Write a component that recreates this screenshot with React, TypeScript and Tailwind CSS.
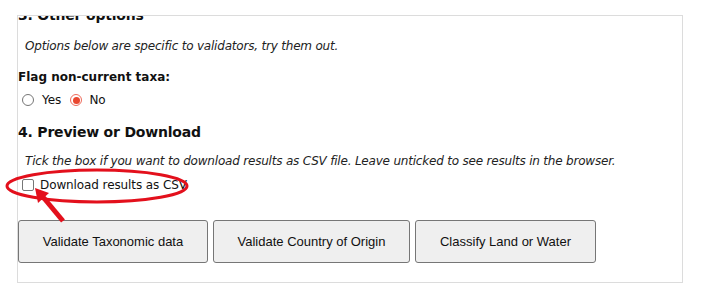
import React from "react";

function Radio({ checked }: { checked?: boolean }) {
  return checked ? (
    <span className="flex h-[12px] w-[12px] items-center justify-center rounded-full border border-[#ef6b5b] bg-white">
      <span className="h-[7px] w-[7px] rounded-full bg-[#e9472f]"></span>
    </span>
  ) : (
    <span className="h-[12px] w-[12px] rounded-full border border-[#767676] bg-white"></span>
  );
}

function Annotation() {
  return (
    <svg
      className="pointer-events-none absolute left-0 top-0"
      width="712"
      height="297"
      viewBox="0 0 712 297"
    >
      <ellipse cx="97" cy="186" rx="90" ry="16" fill="none" stroke="#e3101c" strokeWidth="3" />
      <line x1="63" y1="221" x2="43" y2="197" stroke="#e3101c" strokeWidth="5" />
      <polygon points="35,188 38,203 49,193" fill="#e3101c" />
    </svg>
  );
}

export default function App() {
  const buttons = [
    { label: "Validate Taxonomic data", w: "w-[190px]" },
    { label: "Validate Country of Origin", w: "w-[197px]" },
    { label: "Classify Land or Water", w: "w-[181px]" },
  ];

  return (
    <div className="relative h-[297px] w-[712px] overflow-hidden bg-white pl-[17px] pt-[15px]">
      <div className="h-[268px] w-[666px] overflow-hidden border border-[#dcdcdc] font-['DejaVu_Sans',sans-serif] text-[#111]">
        <div className="-mt-[11px] text-[14px] font-bold leading-[20px] tracking-[-0.2px]">3. Other options</div>
        <p className="mt-[13px] pl-[7px] text-[12px] italic leading-[16px] tracking-[-0.2px] text-[#222]">
          Options below are specific to validators, try them out.
        </p>
        <div className="mt-[15px] text-[12px] font-bold leading-[16px]">Flag non-current taxa:</div>
        <div className="mt-[7px] flex h-[16px] items-center pl-[4px] text-[12px]">
          <Radio />
          <span className="ml-[8px]">Yes</span>
          <span className="ml-[9px]"><Radio checked /></span>
          <span className="ml-[7px]">No</span>
        </div>
        <div className="mt-[14px] text-[14px] font-bold leading-[20px] tracking-[-0.2px]">4. Preview or Download</div>
        <p className="mt-[11px] pl-[7px] text-[12px] italic leading-[16px] tracking-[-0.2px] text-[#222]">
          Tick the box if you want to download results as CSV file. Leave unticked to see results in the browser.
        </p>
        <div className="mt-[8px] flex h-[16px] items-center pl-[4px] text-[12px] tracking-[-0.1px]">
          <span className="h-[12px] w-[12px] rounded-[2px] border border-[#767676] bg-white"></span>
          <span className="ml-[6px]">Download results as CSV</span>
        </div>
        <div className="mt-[27px] flex gap-[5px]">
          {buttons.map((b) => (
            <button
              key={b.label}
              className={`${b.w} h-[43px] rounded-[3px] border border-[#767676] bg-[#efefef] font-['Liberation_Sans',Arial,sans-serif] text-[13px] text-[#111]`}
            >
              {b.label}
            </button>
          ))}
        </div>
      </div>
      <Annotation />
    </div>
  );
}
